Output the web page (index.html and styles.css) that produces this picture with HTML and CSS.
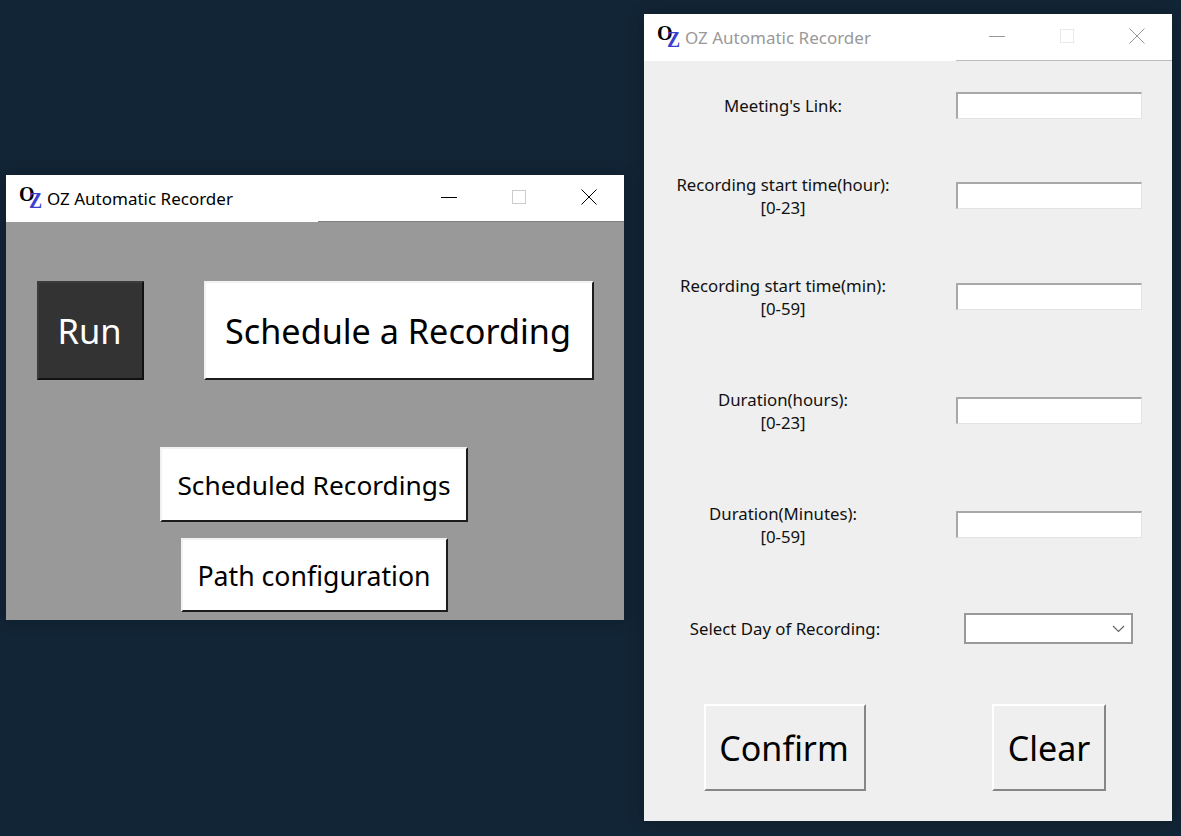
FILE: index.html
```html
<!DOCTYPE html>
<html lang="en">
<head>
    <meta charset="utf-8"/>
    <title>OZ Automatic Recorder</title>
    <link rel="stylesheet" href="styles.css">
</head>
<body>

<!-- main window -->
<div class="window window-main">
    <div class="titlebar">
        <div class="logo"><span class="logo-o">O</span><span class="logo-z">Z</span></div>
        <span class="title">OZ Automatic Recorder</span>
        <div class="controls">
            <div class="control"><svg width="16" height="16" viewBox="0 0 16 16"><path d="M0 8.5H16" stroke="#000"/></svg></div>
            <div class="control"><svg width="16" height="16" viewBox="0 0 16 16"><rect x="1.5" y="1.5" width="13" height="13" fill="none" stroke="#ccc"/></svg></div>
            <div class="control"><svg width="16" height="16" viewBox="0 0 16 16"><path d="M0.5 0.5L15.5 15.5M15.5 0.5L0.5 15.5" stroke="#000"/></svg></div>
        </div>
        <div class="title-line"></div>
    </div>
    <div class="main-body">
        <div class="main-row-top">
            <button class="btn btn-dark btn-run">Run</button>
            <button class="btn btn-white btn-schedule">Schedule a Recording</button>
        </div>
        <button class="btn btn-white btn-list">Scheduled Recordings</button>
        <button class="btn btn-white btn-path">Path configuration</button>
    </div>
</div>

<!-- schedule window, not focused -->
<div class="window window-form inactive">
    <div class="titlebar">
        <div class="logo"><span class="logo-o">O</span><span class="logo-z">Z</span></div>
        <span class="title">OZ Automatic Recorder</span>
        <div class="controls">
            <div class="control"><svg width="16" height="16" viewBox="0 0 16 16"><path d="M0 8.5H16" stroke="#999"/></svg></div>
            <div class="control"><svg width="16" height="16" viewBox="0 0 16 16"><rect x="1.5" y="1.5" width="13" height="13" fill="none" stroke="#e8e8e8"/></svg></div>
            <div class="control"><svg width="16" height="16" viewBox="0 0 16 16"><path d="M0.5 0.5L15.5 15.5M15.5 0.5L0.5 15.5" stroke="#999"/></svg></div>
        </div>
        <div class="title-line"></div>
    </div>
    <div class="form-body">
        <label class="field-label">Meeting's Link:</label>
        <input class="field-input" type="text">

        <label class="field-label">Recording start time(hour):<br>[0-23]</label>
        <input class="field-input" type="text">

        <label class="field-label">Recording start time(min):<br>[0-59]</label>
        <input class="field-input" type="text">

        <label class="field-label">Duration(hours):<br>[0-23]</label>
        <input class="field-input" type="text">

        <label class="field-label">Duration(Minutes):<br>[0-59]</label>
        <input class="field-input" type="text">

        <label class="field-label label-day">Select Day of Recording:</label>
        <div class="day-select">
            <svg width="13" height="8" viewBox="0 0 13 8"><path d="M1 1L6.5 6.5L12 1" fill="none" stroke="#666" stroke-width="1.2"/></svg>
        </div>

        <button class="btn btn-grey btn-confirm">Confirm</button>
        <button class="btn btn-grey btn-clear">Clear</button>
    </div>
</div>

</body>
</html>
```

FILE: styles.css
```css
html, body {
    height: 100%;
}

body {
    margin: 0;
    background-color: #122536;
    font-family: "Noto Sans", "Open Sans", sans-serif;
    color: #000;
    overflow: hidden;
}

.window {
    position: absolute;
    display: flex;
    flex-direction: column;
    box-shadow: 0 0 14px rgba(0,0,0,0.25);
}

.window-main {
    left: 6px;
    top: 175px;
    width: 618px;
    height: 445px;
}

.window-form {
    left: 644px;
    top: 14px;
    width: 528px;
    height: 807px;
}

/* title bar */
.titlebar {
    position: relative;
    flex: none;
    display: flex;
    align-items: center;
    height: 47px;
    background-color: #fff;
}

.logo {
    display: flex;
    width: 24px;
    height: 24px;
    margin-left: 13px;
    margin-top: -4px;
    font-family: "Liberation Serif", serif;
    font-weight: bold;
}

.logo-o {
    margin-top: -1px;
    font-size: 20px;
    line-height: 20px;
}

.logo-z {
    margin-left: -6px;
    margin-top: 5px;
    font-size: 24px;
    line-height: 20px;
    color: #3b3fd0;
    transform: scaleX(0.82);
    transform-origin: left center;
}

.title {
    margin-left: 4px;
    font-size: 17px;
}

.inactive .title {
    color: #999;
}

.controls {
    display: flex;
    margin-left: auto;
    margin-top: -3px;
}

.control {
    display: flex;
    align-items: center;
    justify-content: center;
    width: 70px;
    height: 46px;
}

.title-line {
    position: absolute;
    right: 0;
    bottom: 0;
    left: 312px;
    height: 1px;
    background-color: #808080;
}

.window-form .title-line {
    background-color: #bbb;
}

/* buttons */
.btn {
    display: block;
    margin: 0;
    padding: 0;
    border-width: 2px;
    border-style: solid;
    font-family: inherit;
    color: #000;
}

.btn-white {
    background-color: #fff;
    border-color: #f2f2f2 #1c1c1c #1c1c1c #f2f2f2;
}

.btn-dark {
    background-color: #333;
    border-color: #3c3c3c #111 #111 #3c3c3c;
    color: #fff;
}

.btn-grey {
    background-color: #efefef;
    border-color: #fff #868686 #868686 #fff;
}

/* main window */
.main-body {
    flex: 1;
    display: flex;
    flex-direction: column;
    align-items: center;
    background-color: #999;
}

.main-row-top {
    display: flex;
    align-self: stretch;
    gap: 60px;
    margin-top: 59px;
    margin-bottom: 67px;
    padding-left: 31px;
}

.btn-run {
    width: 107px;
    height: 99px;
    padding-right: 2px;
    font-size: 34.5px;
}

.btn-schedule {
    width: 390px;
    height: 99px;
    padding-right: 2px;
    font-size: 34.2px;
}

.btn-list {
    width: 308px;
    height: 75px;
    margin-right: 2px;
    margin-bottom: 16px;
    font-size: 26.3px;
}

.btn-path {
    width: 267px;
    height: 74px;
    margin-right: 2px;
    font-size: 26.7px;
}

/* schedule form */
.form-body {
    flex: 1;
    display: grid;
    grid-template-columns: 278px 216px;
    grid-template-rows: 89px 91px 111px 117px 111px 97px 141px;
    column-gap: 34px;
    align-items: center;
    background-color: #efefef;
}

.field-label {
    font-size: 16.8px;
    line-height: 23px;
    text-align: center;
    color: #111;
}

.label-day {
    margin-left: 4px;
}

.field-input {
    box-sizing: border-box;
    width: 186px;
    height: 27px;
    padding: 0;
    background-color: #fff;
    border-width: 2px 1px 1px 2px;
    border-style: solid;
    border-color: #a8a8a8 #e3e3e3 #e3e3e3 #a8a8a8;
    border-radius: 0;
    outline: none;
}

.day-select {
    box-sizing: border-box;
    display: flex;
    align-items: center;
    justify-content: flex-end;
    width: 169px;
    height: 31px;
    margin-left: 8px;
    padding-right: 6px;
    background-color: #fff;
    border: 2px solid #999;
}

.btn-confirm {
    justify-self: center;
    width: 162px;
    height: 87px;
    margin-left: 4px;
    padding-right: 2px;
    font-size: 34px;
}

.btn-clear {
    justify-self: start;
    width: 114px;
    height: 87px;
    margin-left: 36px;
    font-size: 34px;
}
```
